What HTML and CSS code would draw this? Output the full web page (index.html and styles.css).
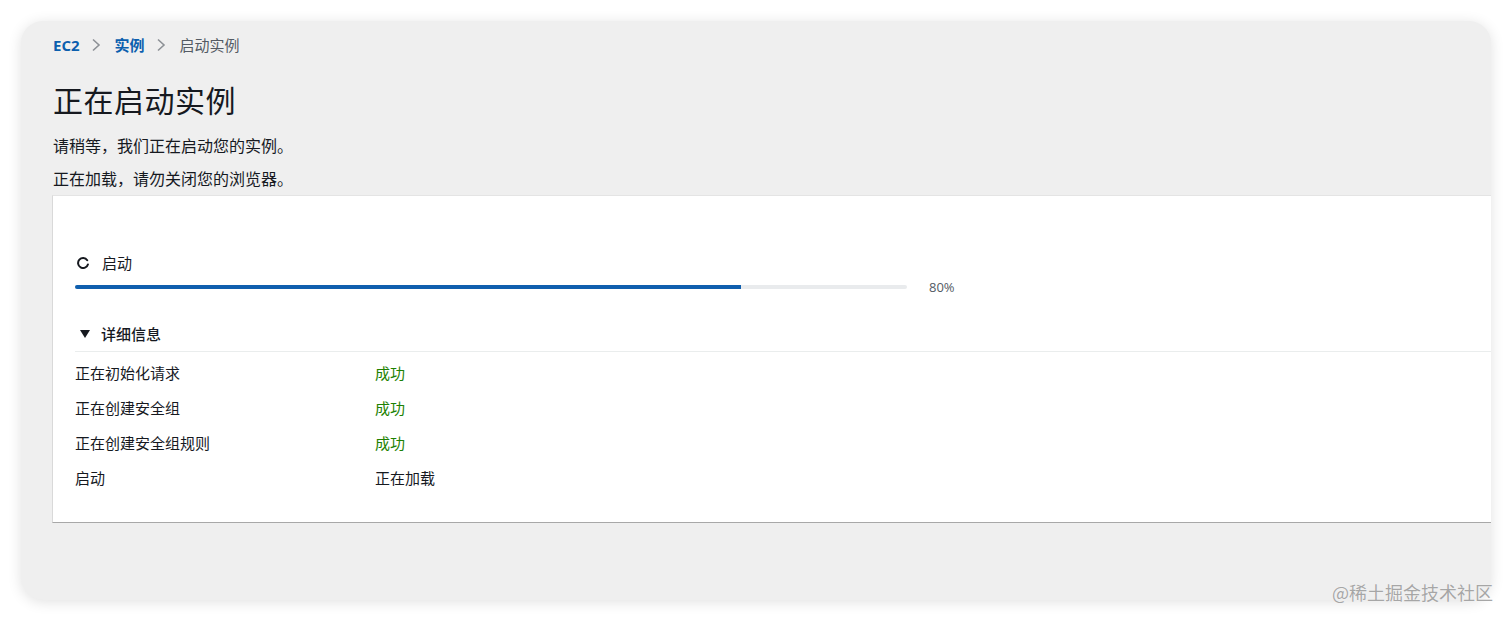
FILE: index.html
```html
<!DOCTYPE html>
<html lang="zh-CN">
<head>
<meta charset="utf-8">
<title>正在启动实例</title>
<link rel="stylesheet" href="styles.css">
</head>
<body>
<div class="window">
  <nav class="crumbs">
    <a class="crumb-link">EC2</a>
    <svg class="chev" width="10" height="14" viewBox="0 0 10 14"><path d="M2 1.5 L8 7 L2 12.5" fill="none" stroke="#8d9196" stroke-width="1.6"/></svg>
    <a class="crumb-link">实例</a>
    <svg class="chev" width="10" height="14" viewBox="0 0 10 14"><path d="M2 1.5 L8 7 L2 12.5" fill="none" stroke="#8d9196" stroke-width="1.6"/></svg>
    <span class="crumb-current">启动实例</span>
  </nav>
  <h1 class="title">正在启动实例</h1>
  <p class="lead first">请稍等，我们正在启动您的实例。</p>
  <p class="lead second">正在加载，请勿关闭您的浏览器。</p>

  <section class="card">
    <div class="status">
      <svg class="spinner" width="12" height="12" viewBox="0 0 12 12"><path d="M10.2 3.2 A5 5 0 1 0 10.9 7.4" fill="none" stroke="#16191f" stroke-width="2" stroke-linecap="round"/></svg>
      <span>启动</span>
    </div>
    <div class="progress-row">
      <div class="track"><div class="fill" style="width:80%"></div></div>
      <span class="pct">80%</span>
    </div>
    <div class="details">
      <div class="details-head">
        <svg class="caret" width="12" height="10" viewBox="0 0 12 10"><polygon points="1,1 11,1 6,9" fill="#16191f"/></svg>
        <span>详细信息</span>
      </div>
      <div class="rows">
        <div class="row"><span class="label">正在初始化请求</span><span class="ok">成功</span></div>
        <div class="row"><span class="label">正在创建安全组</span><span class="ok">成功</span></div>
        <div class="row"><span class="label">正在创建安全组规则</span><span class="ok">成功</span></div>
        <div class="row"><span class="label">启动</span><span class="val">正在加载</span></div>
      </div>
    </div>
  </section>
</div>
<div class="watermark">@稀土掘金技术社区</div>
</body>
</html>
```
FILE: styles.css
```css
* { box-sizing: border-box; }
html, body {
  margin: 0;
  padding: 0;
  background: #ffffff;
  width: 1512px;
  height: 621px;
  overflow: hidden;
}
body {
  font-family: "Noto Sans", "Noto Sans CJK SC", sans-serif;
  color: #16191f;
  position: relative;
}
.window {
  margin: 21px 0 0 21px;
  width: 1470px;
  height: 579px;
  background: #efefef;
  border-radius: 22px;
  box-shadow: 0 2px 14px rgba(0, 0, 0, 0.12);
  padding: 14px 0 0 32px;
  overflow: hidden;
}
.crumbs {
  display: flex;
  align-items: center;
  height: 20px;
  font-size: 15px;
  line-height: 20px;
  font-family: "Noto Sans", "Noto Sans CJK SC", sans-serif;
}
.crumb-link {
  color: #0b5fae;
  font-weight: 700;
  font-family: "Noto Sans CJK SC", sans-serif;
}
.crumb-link:first-child { font-family: "Open Sans", "Noto Sans CJK SC", sans-serif; }
.chev { margin: 0 14px 0 11px; }
.crumb-current { color: #545b64; font-family: "Noto Sans CJK SC", sans-serif; }
.title {
  margin: 24px 0 0 0;
  font-size: 30px;
  line-height: 40px;
  font-weight: 400;
  font-family: "Noto Sans CJK SC", sans-serif;
  color: #16191f;
  letter-spacing: 0.5px;
}
.lead {
  margin: 0;
  font-size: 16px;
  line-height: 24px;
  font-family: "Noto Sans CJK SC", sans-serif;
  color: #16191f;
}
.lead.first { margin-top: 14px; }
.lead.second { margin-top: 9px; }
.card {
  margin-top: 5px;
  margin-left: -1px;
  background: #ffffff;
  border-left: 1px solid #d9d9d9;
  border-top: 1px solid #e4e4e4;
  border-bottom: 1px solid #a8a8a8;
  width: 1500px;
  padding: 57px 0 27px 22px;
  font-family: "Noto Sans CJK SC", sans-serif;
  font-size: 15px;
}
.status {
  display: flex;
  align-items: center;
  height: 20px;
  line-height: 20px;
}
.spinner { margin: 0 13px 0 2px; }
.progress-row {
  display: flex;
  align-items: center;
  height: 20px;
  margin-top: 4px;
}
.track {
  width: 832px;
  height: 4px;
  background: #e9ebed;
  border-radius: 2px;
  overflow: hidden;
}
.fill {
  height: 100%;
  background: #0f5fae;
}
.pct {
  margin-left: 22px;
  font-family: "Open Sans", sans-serif;
  font-size: 13px;
  color: #545b64;
  line-height: 20px;
}
.details { margin-top: 27px; }
.details-head {
  display: flex;
  align-items: center;
  height: 20px;
  line-height: 20px;
  font-weight: 500;
  border-bottom: 1px solid #eaeded;
  box-sizing: content-box;
  padding-bottom: 7px;
}
.caret { margin: 0 10px 0 4px; }
.rows { padding-top: 3px; }
.row {
  display: flex;
  height: 35px;
  line-height: 35px;
}
.label { width: 300px; color: #16191f; }
.ok { color: #1d8102; }
.val { color: #16191f; }
.watermark {
  position: absolute;
  right: 19px;
  top: 580px;
  font-family: "Noto Sans CJK SC", sans-serif;
  font-size: 18px;
  line-height: 24px;
  color: #a6a6a6;
  text-shadow: 0 0 1px #fff;
}
```
